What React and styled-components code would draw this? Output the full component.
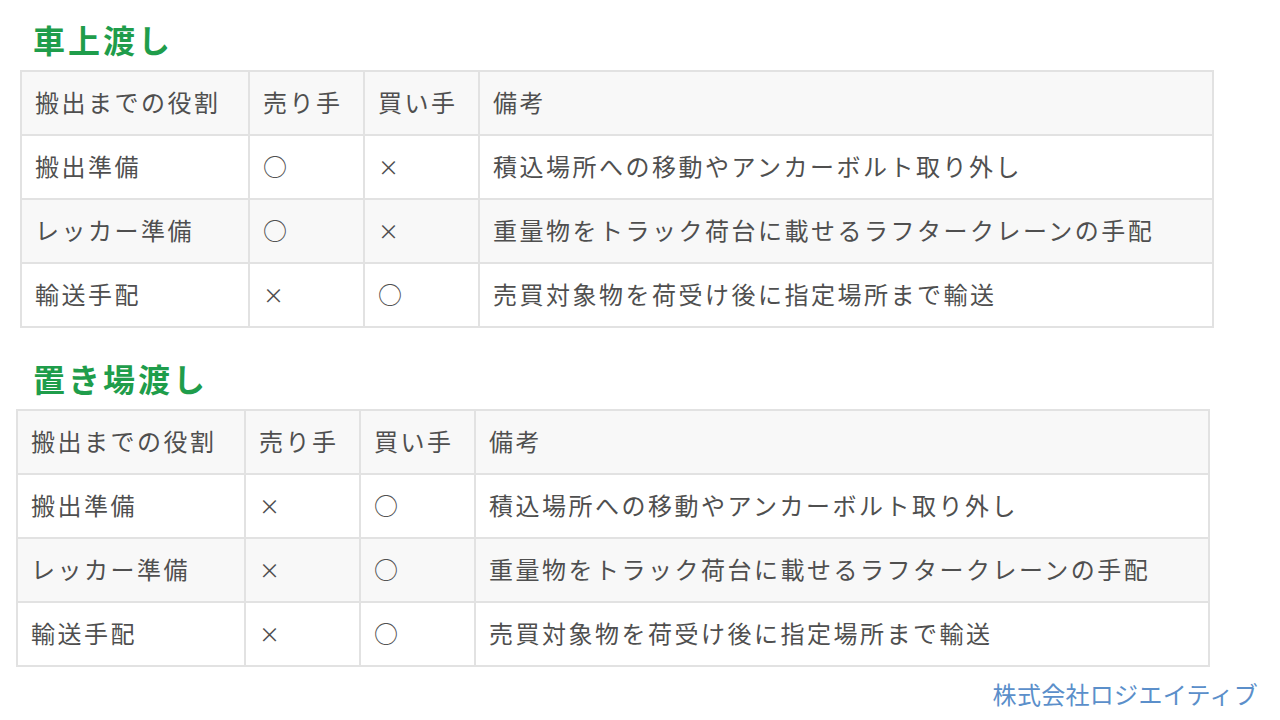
import React from 'react';
import styled, { createGlobalStyle } from 'styled-components';

const GlobalStyle = createGlobalStyle`
  body {
    margin: 0;
    background: #ffffff;
    font-family: "Noto Sans CJK JP", "Noto Sans", sans-serif;
  }
`;

const Page = styled.div`
  width: 1280px;
  height: 720px;
  position: relative;
  overflow: hidden;
  padding-top: 17px;
  box-sizing: border-box;
`;

const Section = styled.section`
  margin-bottom: ${props => props.gap || 0}px;
`;

const Title = styled.h2`
  margin: 0 0 9px 33px;
  height: 44px;
  line-height: 44px;
  font-size: 32px;
  font-weight: 700;
  letter-spacing: 3px;
  color: #1f9d4b;
`;

const Table = styled.table`
  margin-left: ${props => props.offset}px;
  width: 1192px;
  border-collapse: collapse;
  table-layout: fixed;
  border: 2px solid #e2e2e2;
`;

const Row = styled.tr`
  height: 64px;
  background: ${props => (props.shade ? '#f8f8f8' : '#ffffff')};
`;

const Cell = styled.td`
  border: 2px solid #e2e2e2;
  padding: 0 0 3px 13px;
  font-size: ${props => (props.mark ? 21 : 24)}px;
  letter-spacing: 2.5px;
  color: #4f4f4f;
  white-space: nowrap;
  vertical-align: middle;
`;

const Footer = styled.div`
  position: absolute;
  right: 22px;
  bottom: 9px;
  font-size: 24px;
  letter-spacing: 0.3px;
  color: #5b8fca;
`;

const head = ['搬出までの役割', '売り手', '買い手', '備考'];
const widths = [228, 115, 115, 734];

const tables = [
  {
    title: '車上渡し',
    offset: 20,
    rows: [
      ['搬出準備', '○', '×', '積込場所への移動やアンカーボルト取り外し'],
      ['レッカー準備', '○', '×', '重量物をトラック荷台に載せるラフタークレーンの手配'],
      ['輸送手配', '×', '○', '売買対象物を荷受け後に指定場所まで輸送'],
    ],
  },
  {
    title: '置き場渡し',
    offset: 16,
    rows: [
      ['搬出準備', '×', '○', '積込場所への移動やアンカーボルト取り外し'],
      ['レッカー準備', '×', '○', '重量物をトラック荷台に載せるラフタークレーンの手配'],
      ['輸送手配', '×', '○', '売買対象物を荷受け後に指定場所まで輸送'],
    ],
  },
];

export default function App() {
  return (
    <Page>
      <GlobalStyle />
      {tables.map((t, i) => (
        <Section key={t.title} gap={i === 0 ? 28 : 0}>
          <Title>{t.title}</Title>
          <Table offset={t.offset}>
            <colgroup>
              {widths.map((w, k) => (
                <col key={k} style={{ width: w }} />
              ))}
            </colgroup>
            <tbody>
              <Row shade>
                {head.map(h => (
                  <Cell key={h}>{h}</Cell>
                ))}
              </Row>
              {t.rows.map((r, j) => (
                <Row key={j} shade={j % 2 === 1}>
                  {r.map((c, k) => (
                    <Cell key={k} mark={c === '×'}>
                      {c}
                    </Cell>
                  ))}
                </Row>
              ))}
            </tbody>
          </Table>
        </Section>
      ))}
      <Footer>株式会社ロジエイティブ</Footer>
    </Page>
  );
}
